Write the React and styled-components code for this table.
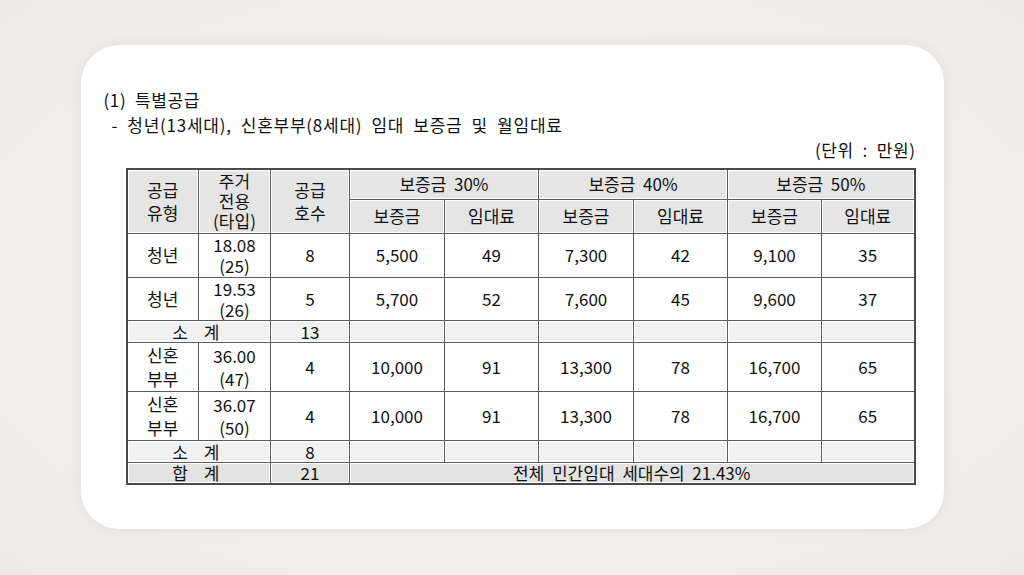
import React from "react";
import styled, { createGlobalStyle } from "styled-components";

const Global = createGlobalStyle`
  html, body { margin: 0; padding: 0; background: #efeeed; }
  body { font-family: "Noto Sans CJK KR", "Noto Sans", sans-serif; color: #111; }
`;

const Page = styled.div`
  width: 1024px;
  height: 575px;
  padding-top: 45px;
  box-sizing: border-box;
  background: radial-gradient(ellipse at center, #f4f3f2 0%, #ecebea 100%);
`;

const Card = styled.div`
  width: 863px;
  height: 484px;
  margin: 0 auto;
  box-sizing: border-box;
  background: #fff;
  border-radius: 38px;
  box-shadow: 0 0 14px rgba(0, 0, 0, 0.06);
  padding: 42px 28px 0 23px;
`;

const Heading = styled.div`
  font-size: 17px;
  line-height: 25px;
  white-space: pre;
  letter-spacing: ${(p) => p.$ls || 0}px;
  padding-left: ${(p) => p.$indent || 0}px;
`;

const Unit = styled.div`
  font-size: 17px;
  line-height: 26px;
  text-align: right;
  white-space: pre;
  letter-spacing: 0.6px;
  margin-bottom: 5px;
`;

const Table = styled.table`
  margin-left: 22px;
  width: 788px;
  border-collapse: collapse;
  table-layout: fixed;
  border: 2px solid #4a4a4a;
  font-size: 17px;
`;

const Row = styled.tr`
  height: ${(p) => p.$h}px;
`;

const Cell = styled.td`
  border: 1px solid #5c5c5c;
  padding: 0;
  text-align: center;
  vertical-align: middle;
  line-height: ${(p) => p.$lh || 20}px;
  background: ${(p) =>
    p.$tone === "head" ? "#e5e5e5" : p.$tone === "sub" ? "#f1f1f1" : p.$tone === "total" ? "#e3e3e3" : "#fff"};
  box-shadow: ${(p) => (p.$tone && p.$tone !== "body" ? "inset 1px 1px 0 #fff, inset -1px -1px 0 #fff" : "none")};
  letter-spacing: ${(p) => p.$ls || 0}px;
  white-space: pre;
`;

const cols = [72, 72, 79, 95, 94, 95, 94, 94, 93];

const data = [
  {
    type: "청년",
    area: "18.08\n(25)",
    n: "8",
    v: ["5,500", "49", "7,300", "42", "9,100", "35"],
    h: 44,
  },
  {
    type: "청년",
    area: "19.53\n(26)",
    n: "5",
    v: ["5,700", "52", "7,600", "45", "9,600", "37"],
    h: 43,
  },
];
const data2 = [
  {
    type: "신혼\n부부",
    area: "36.00\n(47)",
    n: "4",
    v: ["10,000", "91", "13,300", "78", "16,700", "65"],
    h: 48,
  },
  {
    type: "신혼\n부부",
    area: "36.07\n(50)",
    n: "4",
    v: ["10,000", "91", "13,300", "78", "16,700", "65"],
    h: 48,
  },
];

const DataRow = ({ r, tall }) => (
  <Row $h={r.h}>
    <Cell $lh={tall ? 24 : 20}>{r.type}</Cell>
    <Cell $lh={tall ? 23 : 21}>{r.area}</Cell>
    <Cell>{r.n}</Cell>
    {r.v.map((x, i) => (
      <Cell key={i}>{x}</Cell>
    ))}
  </Row>
);

const SubRow = ({ n }) => (
  <Row $h={22}>
    <Cell $tone="sub" colSpan={2} $ls={6} $lh={19}>
      소 계
    </Cell>
    <Cell $tone="sub" $lh={19}>{n}</Cell>
    {[0, 1, 2, 3, 4, 5].map((i) => (
      <Cell key={i} $tone="sub" $lh={19} />
    ))}
  </Row>
);

export default function App() {
  return (
    <>
      <Global />
      <Page>
        <Card>
          <Heading $ls={0.6}>(1)  특별공급</Heading>
          <Heading $indent={8} $ls={0.75}>
            -  청년(13세대),  신혼부부(8세대)  임대  보증금  및  월임대료
          </Heading>
          <Unit>(단위  :  만원)</Unit>
          <Table>
            <colgroup>
              {cols.map((w, i) => (
                <col key={i} style={{ width: w }} />
              ))}
            </colgroup>
            <tbody>
              <Row $h={30}>
                <Cell $tone="head" rowSpan={2} $lh={23}>
                  {"공급\n유형"}
                </Cell>
                <Cell $tone="head" rowSpan={2} $lh={20}>
                  {"주거\n전용\n(타입)"}
                </Cell>
                <Cell $tone="head" rowSpan={2} $lh={23}>
                  {"공급\n호수"}
                </Cell>
                <Cell $tone="head" colSpan={2}>보증금  30%</Cell>
                <Cell $tone="head" colSpan={2}>보증금  40%</Cell>
                <Cell $tone="head" colSpan={2}>보증금  50%</Cell>
              </Row>
              <Row $h={34}>
                {["보증금", "임대료", "보증금", "임대료", "보증금", "임대료"].map((t, i) => (
                  <Cell key={i} $tone="head">
                    {t}
                  </Cell>
                ))}
              </Row>
              {data.map((r, i) => (
                <DataRow key={i} r={r} />
              ))}
              <SubRow n="13" />
              {data2.map((r, i) => (
                <DataRow key={i} r={r} tall />
              ))}
              <SubRow n="8" />
              <Row $h={22}>
                <Cell $tone="total" colSpan={2} $ls={6} $lh={19}>
                  합 계
                </Cell>
                <Cell $tone="total" $lh={19}>21</Cell>
                <Cell $tone="total" colSpan={6} $lh={19}>
                  전체  민간임대  세대수의  21.43%
                </Cell>
              </Row>
            </tbody>
          </Table>
        </Card>
      </Page>
    </>
  );
}
